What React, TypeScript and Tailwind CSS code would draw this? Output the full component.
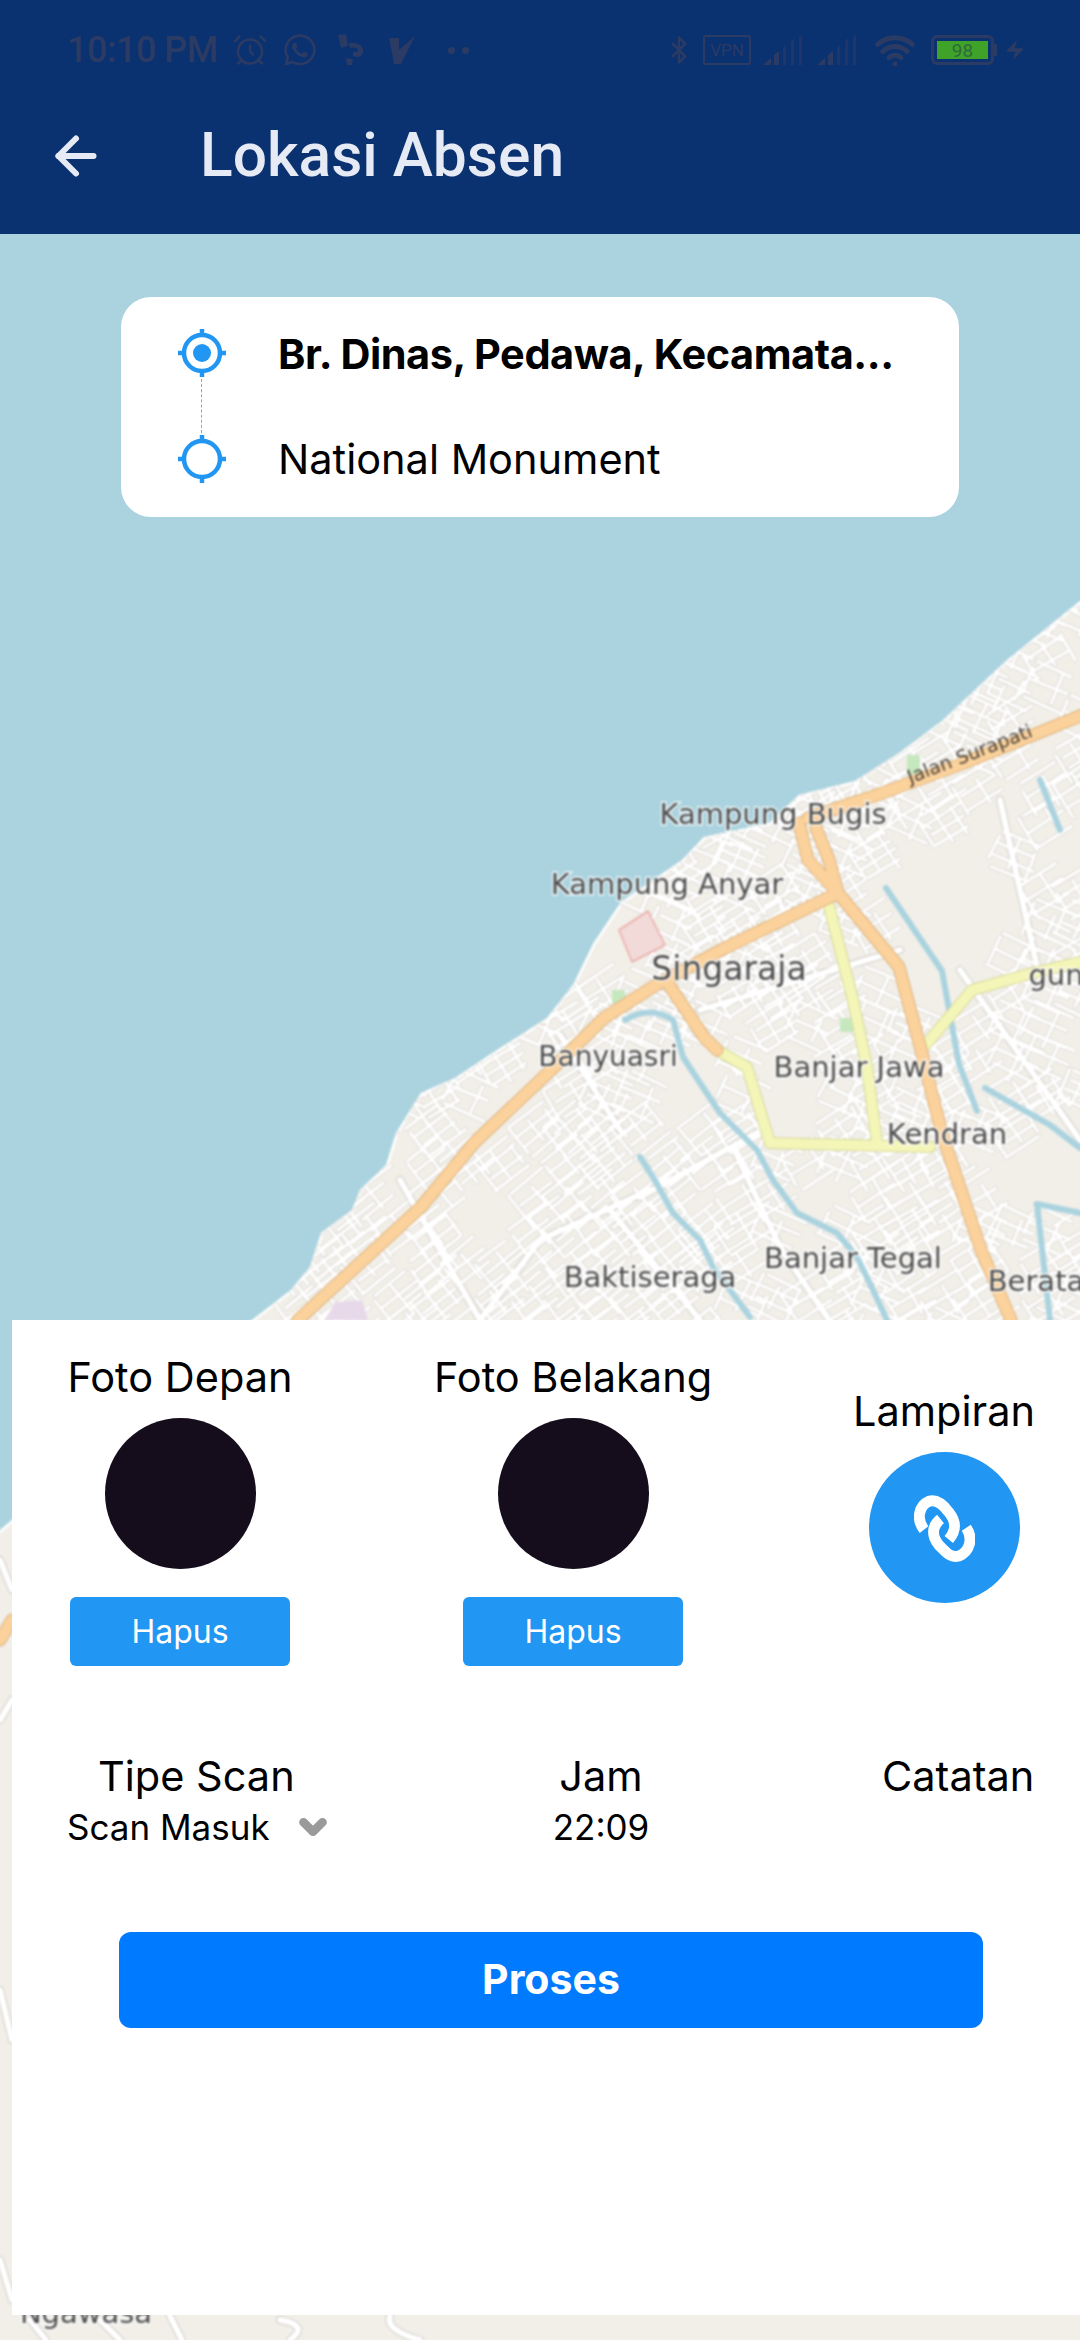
import { AlarmClock, ArrowLeft, Bluetooth, ChevronDown, Wifi, Zap } from "lucide-react"
import { FaWhatsapp } from "react-icons/fa"

const land =
  "M-10 1538 L0 1530 L252 1320 L291 1290 L310 1267 L321 1233 L352 1210 L360 1190 L386 1165 L396 1133 L421 1093 L455 1078 L497 1050 L547 1018 L573 985 L593 944 L621 902 L682 860 L704 837 L769 823 L799 795 L855 781 L899 753 L942 721 L1007 660 L1080 601 L1090 593 L1090 2350 L-10 2350 Z"

// places where the map has no small streets
const blanks = [
  [640, 1060, 705, 1110],
  [765, 1065, 830, 1125],
  [790, 1185, 860, 1232],
  [390, 1165, 425, 1215],
  [455, 1195, 535, 1240],
  [890, 845, 1005, 995],
  [600, 900, 665, 965],
  [960, 1140, 1080, 1190],
]

function buildStreets() {
  let seed = 11
  const rnd = () => {
    seed = (seed * 16807) % 2147483647
    return seed / 2147483647
  }
  let d = ""
  for (let gx = 300; gx < 1100; gx += 34) {
    for (let gy = 620; gy < 1340; gy += 34) {
      const skip = blanks.some(([x1, y1, x2, y2]) => gx > x1 && gx < x2 && gy > y1 && gy < y2)
      if (skip || rnd() < 0.2) continue
      const angle = gx < 720 && gy > 1100 ? -38 : rnd() < 0.5 ? -32 : 24
      const a = (angle * Math.PI) / 180
      const cos = Math.cos(a)
      const sin = Math.sin(a)
      const gap = 10 + rnd() * 9
      const pt = (x: number, y: number) =>
        `${(gx + x * cos - y * sin).toFixed(1)} ${(gy + x * sin + y * cos).toFixed(1)}`
      for (let y = -20; y <= 20; y += gap) {
        d += `M${pt(-24 + rnd() * 8, y)} L${pt(24 - rnd() * 8, y + rnd() * 3 - 1.5)} `
      }
      for (let x = -22; x <= 22; x += gap * 1.6) {
        d += `M${pt(x, -20 + rnd() * 10)} L${pt(x + rnd() * 3 - 1.5, 20 - rnd() * 10)} `
      }
    }
  }
  return d
}

const streets = buildStreets()

const mainStreets =
  "M640 1197 L757 1133 M733 1147 L780 1247 L827 1317 M480 1320 L540 1240 L650 1190 M610 1210 L700 1320 M400 1180 L480 1320 M700 1010 L900 950 M960 970 L1080 1140 M1000 800 L1040 980 M560 1035 L620 1130 M0 1560 L12 1590 M0 1720 L12 1700 M0 1990 L12 2040 M0 2260 L12 2300 M30 2320 L46 2340 M100 2320 L120 2340 M170 2316 L182 2340 M280 2320 Q310 2325 290 2340 M390 2316 Q385 2330 420 2340"

const rivers =
  "M625 1020 Q650 1005 673 1020 L683 1057 L700 1083 L720 1113 L740 1133 L757 1150 L773 1180 L797 1213 L837 1233 L857 1257 L873 1290 L887 1320 M640 1157 L653 1177 L673 1213 L700 1240 L713 1267 L750 1317 M886 888 L942 971 L959 1064 L977 1111 M985 1088 L1050 1125 L1080 1148 M1037 1204 L1080 1213 M1037 1204 L1050 1320 M1040 780 L1060 830"

const mapLabels = [
  { text: "Kampung Bugis", x: 773, y: 824, size: 29 },
  { text: "Kampung Anyar", x: 667, y: 894, size: 29 },
  { text: "Singaraja", x: 729, y: 980, size: 33 },
  { text: "Banyuasri", x: 608, y: 1066, size: 28 },
  { text: "Banjar Jawa", x: 859, y: 1077, size: 29 },
  { text: "Kendran", x: 947, y: 1144, size: 29 },
  { text: "Banjar Tegal", x: 853, y: 1268, size: 29 },
  { text: "Baktiseraga", x: 650, y: 1287, size: 29 },
  { text: "Berata", x: 1036, y: 1291, size: 29 },
  { text: "gun", x: 1056, y: 985, size: 29 },
  { text: "Ngawasa", x: 86, y: 2323, size: 29 },
]

const yellowRoads =
  "M717 1050 L747 1067 L770 1143 L930 1147 M829 906 L853 1000 L867 1067 L877 1143 M923 1048 L972 990 L1029 974 L1080 962 L1090 960"

const orangeRoads =
  "M298 1320 L421 1207 L474 1143 L552 1069 L604 1018 L656 985 L725 948 L838 893 M669 985 L704 1037 L717 1050 M838 893 L808 860 L799 823 M838 893 L829 860 L816 828 M808 818 L877 795 L964 763 L1090 712 M838 893 L899 967 L920 1046 L942 1134 L981 1250 L1011 1320 M0 1640 L12 1620"

function MapBackground() {
  return (
    <svg
      className="absolute -left-[8px] -top-[8px] h-[2122px] w-[1096px] max-w-none blur-[0.8px]"
      viewBox="-8 226 1096 2122"
      aria-hidden="true"
    >
      <defs>
        <clipPath id="land">
          <path d={land} />
        </clipPath>
      </defs>
      <rect x="-8" y="226" width="1096" height="2122" fill="#aad3df" />
      <path d={land} fill="#f2efe9" />
      <g clipPath="url(#land)" fill="none" strokeLinecap="round" strokeLinejoin="round">
        <path d={land} stroke="#ffffff" strokeWidth="5" />
        <path d={streets} stroke="#d6d3cd" strokeWidth="4.4" />
        <path d={mainStreets} stroke="#cfccc6" strokeWidth="8" />
        <path d={streets} stroke="#ffffff" strokeWidth="3.1" />
        <path d={mainStreets} stroke="#ffffff" strokeWidth="6" />
        <path d={rivers} stroke="#aad3df" strokeWidth="6" />
        <path d="M619 930 L648 911 L665 945 L632 962 Z" fill="#f2dad9" stroke="#eba9a5" strokeWidth="1.5" />
        <path d="M612 990 h13 v14 h-13 Z M907 755 h13 v19 h-13 Z M840 1018 h13 v14 h-13 Z" fill="#c6e8bf" stroke="none" />
        <path d="M325 1320 L335 1302 L362 1300 L368 1320 Z" fill="#e8d9ea" stroke="none" />
        <path d={yellowRoads} stroke="#d4d69a" strokeWidth="12" />
        <path d={yellowRoads} stroke="#f4f6b8" strokeWidth="10" />
        <path d={orangeRoads} stroke="#d9b07a" strokeWidth="13" />
        <path d={orangeRoads} stroke="#fcd29c" strokeWidth="11" />
      </g>
      {mapLabels.map((l) => (
        <text
          key={l.text}
          x={l.x}
          y={l.y}
          textAnchor="middle"
          fontSize={l.size}
          className="fill-[#4c4c4c] stroke-white/80 stroke-[3px] font-['DejaVu_Sans',sans-serif] [paint-order:stroke]"
        >
          {l.text}
        </text>
      ))}
      <text
        x="972"
        y="760"
        textAnchor="middle"
        fontSize="19"
        transform="rotate(-21 972 760)"
        className="fill-[#4a4238] font-['DejaVu_Sans',sans-serif]"
      >
        Jalan Surapati
      </text>
    </svg>
  )
}

function SignalBars() {
  return (
    <svg width="42" height="30" viewBox="0 0 42 30" fill="#2b3b64" aria-hidden="true">
      <path d="M0 30 L8 23 V30 Z M11 20 L16 16 V30 H11 Z" />
      <path d="M20 30 V13 L23 10 V30 Z M28 30 V6 L31 3 V30 Z M36 30 V2 L39 0 V30 Z" opacity="0.6" />
    </svg>
  )
}

function StatusBar() {
  return (
    <div className="flex h-[96px] items-center pl-[67px] pr-[54px] pt-[4px] text-[#2b3b64]">
      <span className="w-[165px] shrink-0 font-['Roboto',sans-serif] text-[36px] font-medium tracking-[-0.5px]">10:10 PM</span>
      <AlarmClock className="h-[36px] w-[36px] shrink-0" strokeWidth={1.7} />
      <FaWhatsapp className="ml-[14px] h-[36px] w-[36px] shrink-0" />
      <svg className="ml-[20px] shrink-0" width="26" height="32" viewBox="0 0 26 32" fill="#2b3b64" aria-hidden="true">
        <path d="M0 1 L8 0 L10 12 L3 14 Z M11 9 C20 8 26 12 25 18 C24 23 20 24 15 22 L15 18 C18 18 20 18 20 16 C20 14 17 13 12 14 Z M8 24 L15 25 L14 31 L9 31 Z" />
      </svg>
      <svg className="ml-[25px] shrink-0" width="26" height="28" viewBox="0 0 26 28" fill="#2b3b64" aria-hidden="true">
        <path d="M0 2 H10 V14 L26 0 L12 28 H5 Z" />
      </svg>
      <div className="ml-[33px] flex shrink-0 gap-[7px]">
        <span className="h-[7px] w-[7px] rounded-full bg-[#2b3b64]" />
        <span className="h-[7px] w-[7px] rounded-full bg-[#2b3b64]" />
      </div>
      <div className="ml-auto flex shrink-0 items-center">
        <Bluetooth className="h-[40px] w-[30px]" strokeWidth={2} />
        <div className="ml-[9px] flex h-[30px] w-[48px] items-center justify-center rounded-[3px] border-2 border-[#2b3b64] font-['Roboto',sans-serif] text-[17px] leading-none">
          VPN
        </div>
        <div className="ml-[12px]"><SignalBars /></div>
        <div className="ml-[12px]"><SignalBars /></div>
        <Wifi className="ml-[13px] h-[42px] w-[46px]" strokeWidth={2.8} />
        <div className="ml-[13px] flex h-[30px] w-[63px] items-center justify-center rounded-[6px] border-[3px] border-[#2b3b64]">
          <div className="flex h-[18px] w-[51px] items-center justify-center bg-[#3fa32a] font-['Roboto',sans-serif] text-[19px] leading-none text-[#2e6b3a]">
            98
          </div>
        </div>
        <div className="h-[12px] w-[3px] bg-[#2b3b64]" />
        <Zap className="ml-[7px] h-[32px] w-[22px]" fill="#2b3b64" strokeWidth={0} />
      </div>
    </div>
  )
}

function Target({ filled }: { filled?: boolean }) {
  return (
    <svg width="48" height="48" viewBox="0 0 48 48" fill="none" stroke="#2196f3" strokeWidth="4.5" aria-hidden="true">
      <circle cx="24" cy="24" r="18" />
      <path d="M24 0 V6 M24 42 V48 M0 24 H6 M42 24 H48" />
      {filled && <circle cx="24" cy="24" r="9" fill="#2196f3" stroke="none" />}
    </svg>
  )
}

function LocationCard() {
  return (
    <div className="absolute left-[121px] top-[63px] flex h-[220px] w-[838px] rounded-[30px] bg-white font-['Inter',sans-serif] text-black">
      <div className="flex w-[161px] flex-col items-center pt-[32px]">
        <Target filled />
        <div className="my-[2px] h-[54px] border-l border-dashed border-gray-400" />
        <Target />
      </div>
      <div className="-ml-[4px] flex flex-col pt-[33px]">
        <div className="whitespace-nowrap text-[41.5px] font-bold leading-[48px] tracking-[-0.45px]">
          Br. Dinas, Pedawa, Kecamata...
        </div>
        <div className="mt-[57px] text-[41.5px] leading-[48px]">National Monument</div>
      </div>
    </div>
  )
}

function PhotoColumn({ label, className }: { label: string; className: string }) {
  return (
    <div className={`flex flex-col items-center ${className}`}>
      <div className="whitespace-nowrap text-[41.5px] leading-[48px]">{label}</div>
      <div className="mt-[17px] h-[151px] w-[151px] rounded-full bg-[#150c1c]" />
      <button className="mt-[28px] h-[69px] w-[220px] rounded-[6px] bg-[#2196f3] text-[32px] text-white" type="button">
        Hapus
      </button>
    </div>
  )
}

function LinkIcon() {
  return (
    <svg width="61" height="68" viewBox="100 40 184 206" fill="none" stroke="white" strokeWidth="33" aria-hidden="true">
      <path d="M130 148 C105 115 115 75 145 62 C170 55 190 75 205 95 C225 120 232 145 205 178" />
      <path d="M258 142 C280 175 268 215 235 228 C210 235 195 215 175 195 C155 170 150 140 180 116" />
    </svg>
  )
}

function BottomPanel() {
  return (
    <div className="absolute left-[12px] right-0 top-[1086px] h-[995px] bg-white font-['Inter',sans-serif] text-black">
      <div className="relative flex items-start pt-[33px]">
        <PhotoColumn label="Foto Depan" className="ml-[58px] w-[220px]" />
        <PhotoColumn label="Foto Belakang" className="ml-[173px] w-[220px]" />
        <div className="ml-[161px] flex w-[200px] flex-col items-center pt-[34px]">
          <div className="text-[41.5px] leading-[48px]">Lampiran</div>
          <div className="mt-[17px] flex h-[151px] w-[151px] items-center justify-center rounded-full bg-[#2196f3]">
            <LinkIcon />
          </div>
        </div>
      </div>
      <div className="mt-[86px] flex items-start">
        <div className="ml-[55px] flex w-[270px] flex-col">
          <div className="pl-[31px] text-[41.5px] leading-[48px]">Tipe Scan</div>
          <div className="mt-[7px] flex items-center text-[35px] leading-[40px]">
            Scan Masuk
            <ChevronDown className="ml-[24px] h-[38px] w-[38px] text-[#9a9a9a]" strokeWidth={5.5} />
          </div>
        </div>
        <div className="ml-[209px] flex w-[110px] flex-col items-center">
          <div className="text-[41.5px] leading-[48px]">Jam</div>
          <div className="mt-[7px] text-[35px] leading-[40px]">22:09</div>
        </div>
        <div className="ml-[226px] text-[41.5px] leading-[48px]">Catatan</div>
      </div>
      <button
        className="ml-[107px] mt-[85px] h-[96px] w-[864px] rounded-[12px] bg-[#007aff] text-[41px] font-bold text-white"
        type="button"
      >
        Proses
      </button>
    </div>
  )
}

export default function App() {
  return (
    <div className="flex h-[2340px] w-[1080px] flex-col overflow-hidden bg-white">
      <header className="relative z-10 h-[234px] shrink-0 bg-[#0a3170]">
        <StatusBar />
        <div className="flex items-center pl-[46px] pt-[26px] text-[#e6eaf4]">
          <ArrowLeft className="h-[60px] w-[60px]" strokeWidth={2.4} />
          <h1 className="ml-[94px] font-['Roboto',sans-serif] text-[60.5px] font-medium leading-[68px]">Lokasi Absen</h1>
        </div>
      </header>
      <main className="relative flex-1 overflow-hidden">
        <MapBackground />
        <LocationCard />
        <BottomPanel />
      </main>
    </div>
  )
}
